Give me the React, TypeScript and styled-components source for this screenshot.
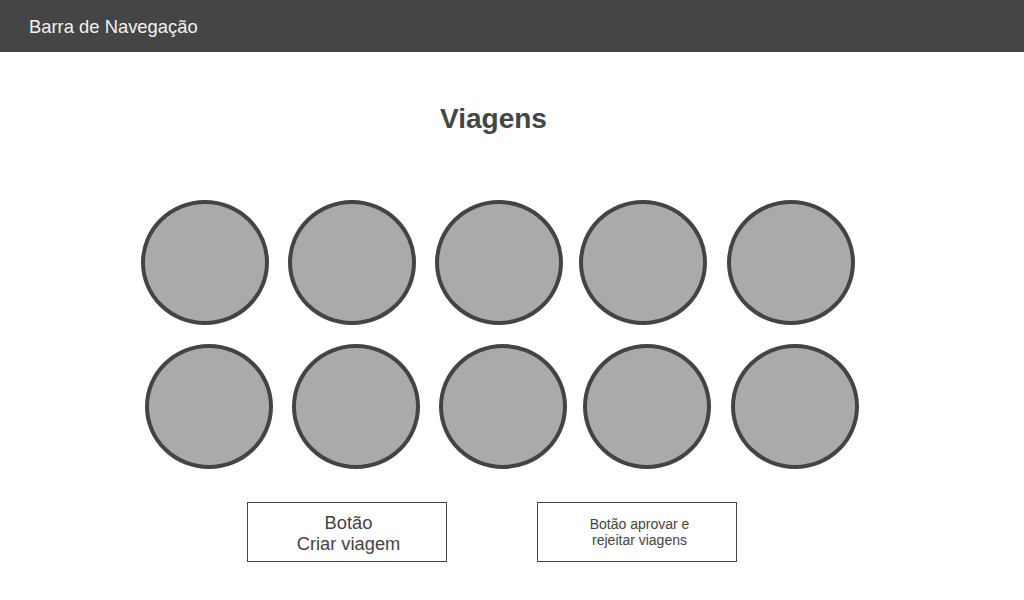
import React from "react";
import styled, { createGlobalStyle } from "styled-components";

const Global = createGlobalStyle`
  html, body { margin: 0; padding: 0; background: #ffffff; }
  body { font-family: "Liberation Sans", Arial, sans-serif; }
`;

const Page = styled.div`
  width: 1024px;
  height: 600px;
  display: flex;
  flex-direction: column;
  background: #fff;
  overflow: hidden;
`;

const NavBar = styled.header`
  height: 52px;
  background: #454545;
  display: flex;
  align-items: center;
  padding-left: 29px;
  box-sizing: border-box;
`;

const NavTitle = styled.span`
  color: #f2f2f2;
  font-size: 18.4px;
  line-height: 20px;
  padding-top: 2px;
`;

const Title = styled.h1`
  margin: 51px 0 0 0;
  padding-right: 37px;
  text-align: center;
  font-size: 28px;
  line-height: 32px;
  font-weight: bold;
  color: #454545;
`;

const Grid = styled.div`
  margin-top: 65px;
  display: flex;
  flex-direction: column;
  gap: 19px;
`;

const CircleRow = styled.div<{ $shift: number }>`
  display: flex;
  padding-left: ${(p) => p.$shift}px;
`;

const Circle = styled.div<{ $gap: number }>`
  width: 128px;
  height: 125px;
  box-sizing: border-box;
  border: 4px solid #444444;
  border-radius: 50%;
  background: #aaaaaa;
  margin-left: ${(p) => p.$gap}px;
  flex: none;
`;

const ButtonRow = styled.div`
  margin-top: 33px;
  display: flex;
  gap: 90px;
  padding-left: 247px;
`;

const BoxButton = styled.div<{ $size: number; $lh: number; $pt: number }>`
  width: 200px;
  height: 60px;
  box-sizing: border-box;
  border: 1px solid #444444;
  display: flex;
  align-items: center;
  justify-content: center;
  text-align: center;
  color: #444444;
  font-size: ${(p) => p.$size}px;
  line-height: ${(p) => p.$lh}px;
  white-space: pre-line;
  padding-left: ${(p) => (p.$size > 16 ? 3 : 5)}px;
  padding-top: ${(p) => p.$pt}px;
`;

const gaps = [0, 19, 19, 16, 20];

export default function App() {
  return (
    <>
      <Global />
      <Page>
        <NavBar>
          <NavTitle>Barra de Navegação</NavTitle>
        </NavBar>
        <Title>Viagens</Title>
        <Grid>
          {[141, 145].map((shift) => (
            <CircleRow key={shift} $shift={shift}>
              {gaps.map((g, i) => (
                <Circle key={i} $gap={g} />
              ))}
            </CircleRow>
          ))}
        </Grid>
        <ButtonRow>
          <BoxButton $size={18.3} $lh={21} $pt={1}>{"Botão\nCriar viagem"}</BoxButton>
          <BoxButton $size={14} $lh={16} $pt={0}>{"Botão aprovar e\nrejeitar viagens"}</BoxButton>
        </ButtonRow>
      </Page>
    </>
  );
}
